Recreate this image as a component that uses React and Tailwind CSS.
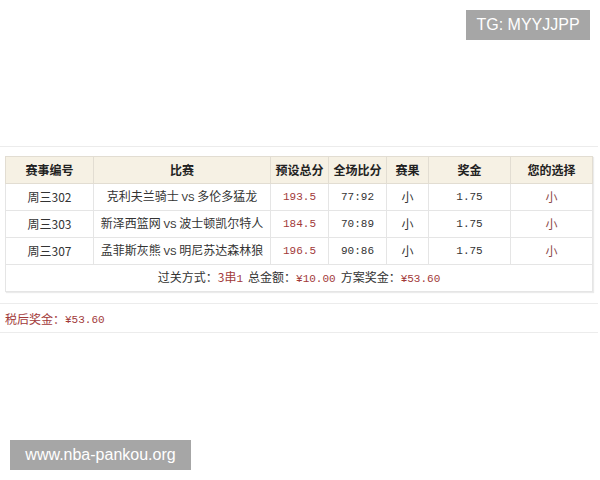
import React from "react";

const rows = [
  { id: "周三302", match: ["克利夫兰骑士", "多伦多猛龙"], total: "193.5", score: "77:92", result: "小", odds: "1.75", pick: "小" },
  { id: "周三303", match: ["新泽西篮网", "波士顿凯尔特人"], total: "184.5", score: "70:89", result: "小", odds: "1.75", pick: "小" },
  { id: "周三307", match: ["孟菲斯灰熊", "明尼苏达森林狼"], total: "196.5", score: "90:86", result: "小", odds: "1.75", pick: "小" },
];

const cjk = { fontFamily: '"Noto Sans CJK SC", "Noto Sans", sans-serif' };
const mono = { fontFamily: '"Liberation Mono", "Noto Sans CJK SC", monospace' };

export default function App() {
  return (
    <div className="relative w-[600px] h-[480px] bg-white overflow-hidden text-[#333]" style={cjk}>
      <div className="absolute right-[10px] top-[10px] w-[124px] h-[30px] bg-[#a6a6a6] text-white text-[16px] flex items-center justify-center" style={{ fontFamily: '"Liberation Sans", Arial, sans-serif' }}>
        TG: MYYJJPP
      </div>

      <div className="pt-[146px]">
        <div className="border-t border-[#ececec] w-[598px] pt-[9px] pl-[5px]">
          <table className="table-fixed border-collapse w-[587px] text-[12px] shadow-[1px_1px_1px_rgba(0,0,0,0.08)]">
            <thead>
              <tr className="h-[27px] bg-[#f6f1e4] font-bold text-[#222]">
                <th className="w-[88px] border border-[#e2ddd2] font-bold">赛事编号</th>
                <th className="w-[177px] border border-[#e2ddd2] font-bold">比赛</th>
                <th className="w-[58px] border border-[#e2ddd2] font-bold">预设总分</th>
                <th className="w-[58px] border border-[#e2ddd2] font-bold">全场比分</th>
                <th className="w-[42px] border border-[#e2ddd2] font-bold">赛果</th>
                <th className="w-[82px] border border-[#e2ddd2] font-bold">奖金</th>
                <th className="w-[82px] border border-[#e2ddd2] font-bold">您的选择</th>
              </tr>
            </thead>
            <tbody>
              {rows.map((r) => (
                <tr key={r.id} className="h-[27px] text-center">
                  <td className="border border-[#e5e5e5]">{r.id}</td>
                  <td className="border border-[#e5e5e5] whitespace-nowrap">
                    {r.match[0]} <span className="text-[11px]" style={mono}>VS</span> {r.match[1]}
                  </td>
                  <td className="border border-[#e5e5e5] text-[#a23a3a] text-[11px]" style={mono}>{r.total}</td>
                  <td className="border border-[#e5e5e5] text-[11px]" style={mono}>{r.score}</td>
                  <td className="border border-[#e5e5e5]">{r.result}</td>
                  <td className="border border-[#e5e5e5] text-[11px]" style={mono}>{r.odds}</td>
                  <td className="border border-[#e5e5e5] text-[#8c4a4a]">{r.pick}</td>
                </tr>
              ))}
              <tr className="h-[27px]">
                <td colSpan={7} className="border border-[#e5e5e5] text-center whitespace-nowrap">
                  过关方式：<span className="text-[#a23a3a]">3串<span className="text-[11px]" style={mono}>1</span></span>
                  <span className="ml-[5px]">总金额：</span>
                  <span className="text-[#a23a3a] text-[11px]" style={mono}>¥10.00</span>
                  <span className="ml-[5px]">方案奖金：</span>
                  <span className="text-[#a23a3a] text-[11px]" style={mono}>¥53.60</span>
                </td>
              </tr>
            </tbody>
          </table>
        </div>
        <div className="mt-[11px] w-[598px] h-[30px] border-t border-b border-[#ececec] flex items-end pb-[4px] pl-[5px] text-[12px] text-[#a23a3a]">
          税后奖金：<span className="text-[11px]" style={mono}>¥53.60</span>
        </div>
      </div>

      <div className="absolute left-[10px] top-[440px] w-[181px] h-[30px] bg-[#a6a6a6] text-white text-[16px] flex items-center justify-center" style={{ fontFamily: '"Liberation Sans", Arial, sans-serif' }}>
        www.nba-pankou.org
      </div>
    </div>
  );
}
